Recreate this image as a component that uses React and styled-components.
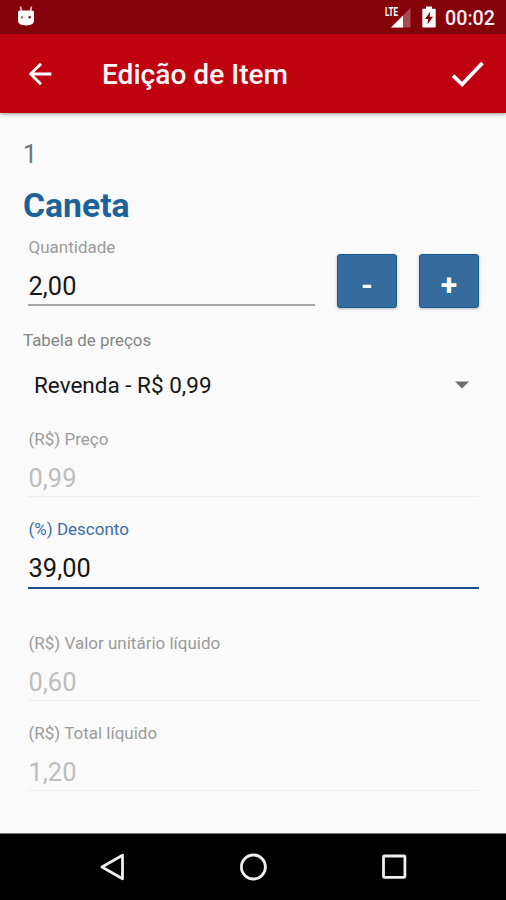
import React from "react";
import styled, { createGlobalStyle } from "styled-components";

const GlobalStyle = createGlobalStyle`
  * { box-sizing: border-box; }
  body { margin: 0; background: #fafafa; font-family: Roboto, "Liberation Sans", sans-serif; }
`;

const Screen = styled.div`
  width: 506px;
  height: 900px;
  display: flex;
  flex-direction: column;
  overflow: hidden;
  background: #fafafa;
`;

const StatusBar = styled.header`
  height: 34px;
  flex: none;
  display: flex;
  align-items: center;
  padding: 0 10px 0 16px;
  background: #85020b;
`;

const StatusIcons = styled.div`
  margin-left: auto;
  display: flex;
  align-items: center;
`;

const SignalSlot = styled.span`
  display: flex;
  margin-right: 8px;
`;

const Clock = styled.span`
  margin-left: 8px;
  width: 51px;
  font-size: 19.7px;
  line-height: 24px;
  font-weight: 500;
  color: #fbeeee;
  padding-top: 3px;
  white-space: nowrap;
`;

const Toolbar = styled.div`
  height: 79px;
  flex: none;
  display: flex;
  align-items: center;
  padding: 0 16px 0 23px;
  background: #bf0210;
  box-shadow: 0 1px 4px rgba(0, 0, 0, 0.4);
`;

const IconButton = styled.button`
  display: flex;
  padding: 0;
  border: 0;
  background: none;
`;

const Title = styled.h1`
  margin: 3px auto 0 45px;
  font-size: 28.1px;
  line-height: 36px;
  font-weight: 500;
  color: #fff5f5;
  white-space: nowrap;
`;

const Content = styled.main`
  flex: 1;
  display: flex;
  flex-direction: column;
  padding: 27px 27px 0 23px;
`;

const Code = styled.div`
  height: 30px;
  font-size: 25.3px;
  line-height: 30px;
  color: #757575;
`;

const ProductName = styled.h2`
  margin: 16px 0 0;
  height: 40px;
  font-size: 33.7px;
  line-height: 40px;
  font-weight: 700;
  color: #1b6299;
`;

const QuantityRow = styled.div`
  display: flex;
  margin-top: 11px;
  height: 69px;
`;

const Field = styled.div`
  width: ${(p) => p.$width || "451px"};
  height: 70px;
  flex: none;
  margin-left: 5px;
  margin-top: ${(p) => p.$gap || 0}px;
`;

const FieldLabel = styled.label`
  display: block;
  padding-left: 0.5px;
  font-size: 17px;
  line-height: 20px;
  color: ${(p) => (p.$active ? "#3a6ea5" : "#9b9b9b")};
`;

const FieldValue = styled.div`
  height: ${(p) => (p.$active ? 50 : p.$disabled ? 48 : 49)}px;
  padding: 14px 0 0 0.6px;
  font-size: 25.4px;
  line-height: 30px;
  color: ${(p) => (p.$disabled ? "#bdbdbd" : "#161616")};
  border-bottom: ${(p) =>
    p.$active ? "2px solid #1d4f92" : p.$disabled ? "1px solid #efefef" : "2px solid #a6a6a6"};
`;

const StepButton = styled.button`
  width: 60px;
  height: 54px;
  margin: 17px 0 0 22px;
  flex: none;
  display: flex;
  align-items: center;
  justify-content: center;
  padding: 8px 0 0;
  border: 1px solid #155a91;
  border-radius: 3px;
  background: #356c9d;
  box-shadow: 0 1px 3px rgba(0, 0, 0, 0.28);
  font: 700 30px/32px Roboto, "Liberation Sans", sans-serif;
  color: #fff;
`;

const SelectLabel = styled.label`
  margin-top: 24px;
  font-size: 16.9px;
  line-height: 20px;
  color: #858585;
`;

const Select = styled.div`
  display: flex;
  align-items: center;
  justify-content: space-between;
  margin-top: 20px;
  height: 30px;
  padding: 0 10px 0 11px;
  font-size: 22.5px;
  line-height: 30px;
  color: #161616;
`;

const NavBar = styled.nav`
  height: 67px;
  flex: none;
  display: flex;
  justify-content: center;
  align-items: center;
  gap: 112px;
  background: #000;
  border-top: 1px solid #777;
`;

const fields = [
  { label: "(R$) Preço", value: "0,99", gap: 29, disabled: true },
  { label: "(%) Desconto", value: "39,00", gap: 20, active: true },
  { label: "(R$) Valor unitário líquido", value: "0,60", gap: 44, disabled: true },
  { label: "(R$) Total líquido", value: "1,20", gap: 20, disabled: true },
];

function DebugIcon() {
  return (
    <svg width="20" height="24" viewBox="0 0 20 24">
      <path d="M4.5 1.5 5.5 6M15.5 1.5 14.5 6" stroke="#efc9cb" strokeWidth="1.6" />
      <path d="M2 7Q2 5.5 4 5.5H16Q18 5.5 18 7V16Q18 20 10 20.5Q2 20 2 16Z" fill="#fff" />
      <circle cx="6" cy="12.3" r="1.2" fill="#96727c" />
      <circle cx="13.7" cy="12.3" r="1.3" fill="#7a1730" />
    </svg>
  );
}

function SignalIcon() {
  return (
    <svg width="28" height="24" viewBox="0 0 28 24">
      <path d="M6 22.5 25.5 3V22.5Z" fill="#a94a52" />
      <path d="M6 22.5 18 10.5V22.5Z" fill="#fff" />
      <text x="0" y="11.4" fontSize="12.5" fontWeight="700" fill="#fff" textLength="13" lengthAdjust="spacingAndGlyphs">
        LTE
      </text>
    </svg>
  );
}

function BatteryIcon() {
  return (
    <svg width="16" height="24" viewBox="0 0 16 24">
      <path d="M5 1.5h6v2.3h2.7q1 0 1 1V21.5q0 1-1 1H2.3q-1 0-1-1V4.8q0-1 1-1H5Z" fill="#fff" />
      <path d="M9.3 6.5 4 14H7.2L6.5 19.5 12 11.8H8.7Z" fill="#85020b" />
    </svg>
  );
}

export default function App() {
  return (
    <>
      <GlobalStyle />
      <Screen>
        <StatusBar>
          <DebugIcon />
          <StatusIcons>
            <SignalSlot>
              <SignalIcon />
            </SignalSlot>
            <BatteryIcon />
            <Clock>00:02</Clock>
          </StatusIcons>
        </StatusBar>
        <Toolbar>
          <IconButton aria-label="Voltar">
            <svg width="34" height="34" viewBox="0 0 24 24">
              <path d="M20 11H7.83l5.59-5.59L12 4l-8 8 8 8 1.41-1.41L7.83 13H20v-2z" fill="#fff" />
            </svg>
          </IconButton>
          <Title>Edição de Item</Title>
          <IconButton aria-label="Confirmar">
            <svg width="44" height="34" viewBox="0 0 44 34">
              <path d="M7 18.7 16.1 27.4 36.5 6" fill="none" stroke="#fff" strokeWidth="3.7" />
            </svg>
          </IconButton>
        </Toolbar>
        <Content>
          <Code>1</Code>
          <ProductName>Caneta</ProductName>
          <QuantityRow>
            <Field $width="287px">
              <FieldLabel>Quantidade</FieldLabel>
              <FieldValue>2,00</FieldValue>
            </Field>
            <StepButton>-</StepButton>
            <StepButton>+</StepButton>
          </QuantityRow>
          <SelectLabel>Tabela de preços</SelectLabel>
          <Select>
            Revenda - R$ 0,99
            <svg width="14" height="8" viewBox="0 0 14 8">
              <path d="M0 .5H14L7 7.5Z" fill="#6d6d6d" />
            </svg>
          </Select>
          {fields.map((f) => (
            <Field key={f.label} $gap={f.gap}>
              <FieldLabel $active={f.active}>{f.label}</FieldLabel>
              <FieldValue $active={f.active} $disabled={f.disabled}>
                {f.value}
              </FieldValue>
            </Field>
          ))}
        </Content>
        <NavBar>
          <svg width="28" height="30" viewBox="0 0 28 30">
            <path d="M24.5 3.2V26.8L4 15Z" fill="none" stroke="#eee" strokeWidth="2.8" strokeLinejoin="round" />
          </svg>
          <svg width="30" height="30" viewBox="0 0 30 30">
            <circle cx="15.4" cy="15" r="12" fill="none" stroke="#eee" strokeWidth="2.8" />
          </svg>
          <svg width="28" height="30" viewBox="0 0 28 30">
            <rect x="3.5" y="4" width="21.4" height="21.4" rx="1" fill="none" stroke="#eee" strokeWidth="2.8" />
          </svg>
        </NavBar>
      </Screen>
    </>
  );
}
